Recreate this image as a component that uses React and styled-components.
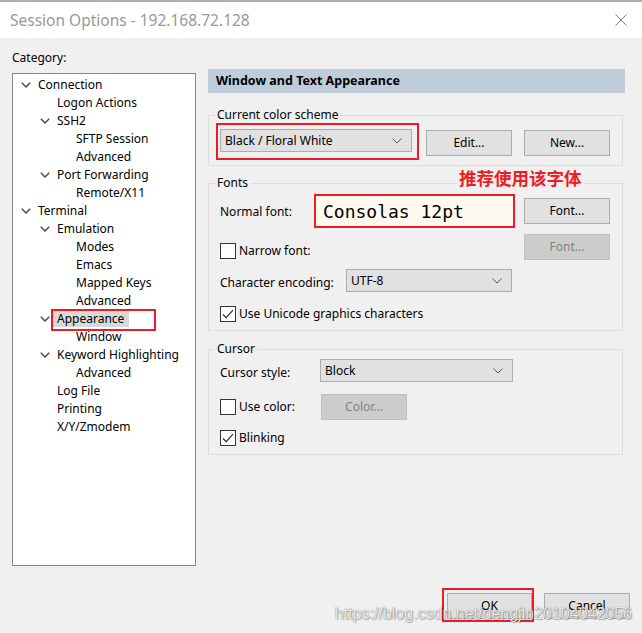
import React from "react";
import styled, { createGlobalStyle } from "styled-components";

const GlobalStyle = createGlobalStyle`
  html, body {
    margin: 0;
    padding: 0;
    background: #f0f0f0;
  }
  body {
    font-family: "Noto Sans", "Open Sans", sans-serif;
    font-size: 12px;
    color: #000;
  }
`;

const tree = [
  { label: "Connection", level: 0, open: true },
  { label: "Logon Actions", level: 1 },
  { label: "SSH2", level: 1, open: true },
  { label: "SFTP Session", level: 2 },
  { label: "Advanced", level: 2 },
  { label: "Port Forwarding", level: 1, open: true },
  { label: "Remote/X11", level: 2 },
  { label: "Terminal", level: 0, open: true },
  { label: "Emulation", level: 1, open: true },
  { label: "Modes", level: 2 },
  { label: "Emacs", level: 2 },
  { label: "Mapped Keys", level: 2 },
  { label: "Advanced", level: 2 },
  { label: "Appearance", level: 1, open: true, selected: true },
  { label: "Window", level: 2 },
  { label: "Keyword Highlighting", level: 1, open: true },
  { label: "Advanced", level: 2 },
  { label: "Log File", level: 1 },
  { label: "Printing", level: 1 },
  { label: "X/Y/Zmodem", level: 1 },
];

function Chevron() {
  return (
    <svg width="10" height="6" viewBox="0 0 10 6">
      <path d="M0.8 0.8 L5 5 L9.2 0.8" fill="none" stroke="#444" strokeWidth="1.4" />
    </svg>
  );
}

function ComboArrow() {
  return (
    <svg width="10" height="6" viewBox="0 0 10 6">
      <path d="M0.5 0.5 L5 5 L9.5 0.5" fill="none" stroke="#555" strokeWidth="1" />
    </svg>
  );
}

function Check({ checked, children }) {
  return (
    <CheckLabel>
      <CheckBox>
        {checked && (
          <svg width="14" height="14" viewBox="0 0 14 14">
            <path d="M2 7.5 L5.2 10.6 L12 3.2" fill="none" stroke="#222" strokeWidth="1.1" />
          </svg>
        )}
      </CheckBox>
      {children}
    </CheckLabel>
  );
}

function Combo({ value, width }) {
  return (
    <ComboBox $w={width}>
      <span>{value}</span>
      <ComboArrow />
    </ComboBox>
  );
}

export default function App() {
  return (
    <>
      <GlobalStyle />
      <Window>
        <TitleBar>
          <Title>Session Options - 192.168.72.128</Title>
          <svg width="12" height="12" viewBox="0 0 12 12">
            <path d="M0.5 0.5 L11.5 11.5 M11.5 0.5 L0.5 11.5" stroke="#777" strokeWidth="1" />
          </svg>
        </TitleBar>

        <Body>
          <Main>
            <LeftColumn>
              <CategoryLabel>Category:</CategoryLabel>
              <TreeBox>
                {tree.map((item, i) => (
                  <TreeRow key={i} $level={item.level}>
                    <ChevronSlot>{item.open && <Chevron />}</ChevronSlot>
                    {item.selected ? (
                      <Marked $t={2} $r={27} $b={4} $l={6}>
                        <Selected>{item.label}</Selected>
                      </Marked>
                    ) : (
                      item.label
                    )}
                  </TreeRow>
                ))}
              </TreeBox>
            </LeftColumn>

            <RightColumn>
              <PanelHeader>Window and Text Appearance</PanelHeader>

              <Group $mt={14} $pt={6} $pb={9}>
                <Legend>Current color scheme</Legend>
                <Row $align="flex-start">
                  <Marked $t={6} $r={7} $b={8} $l={4}>
                    <Combo value="Black / Floral White" width={192} />
                  </Marked>
                  <Button $ml={14} $mt={1}>Edit...</Button>
                  <Button $ml={12} $mt={1}>New...</Button>
                </Row>
              </Group>

              <Group $mt={9} $pt={3} $pb={8}>
                <Legend>Fonts</Legend>
                <Note>推荐使用该字体</Note>
                <Row $h={34}>
                  <FieldLabel $w={94}>Normal font:</FieldLabel>
                  <FontPreview>Consolas 12pt</FontPreview>
                  <Button $ml="auto">Font...</Button>
                </Row>
                <Row $mt={6} $h={25} $align="flex-start">
                  <CheckCell $mt={9}>
                    <Check>Narrow font:</Check>
                  </CheckCell>
                  <Button $ml="auto" disabled>Font...</Button>
                </Row>
                <Row $mt={10} $h={23}>
                  <FieldLabel $w={126} $dy={2}>Character encoding:</FieldLabel>
                  <Combo value="UTF-8" width={166} />
                </Row>
                <Row $mt={14} $h={16}>
                  <Check checked>Use Unicode graphics characters</Check>
                </Row>
              </Group>

              <Group $mt={10} $pt={2} $pb={8}>
                <Legend>Cursor</Legend>
                <Row $h={23}>
                  <FieldLabel $w={100} $dy={2}>Cursor style:</FieldLabel>
                  <Combo value="Block" width={193} />
                </Row>
                <Row $mt={12} $h={25}>
                  <CheckCell $w={101}>
                    <Check>Use color:</Check>
                  </CheckCell>
                  <Button disabled>Color...</Button>
                </Row>
                <Row $mt={11} $h={16}>
                  <Check checked>Blinking</Check>
                </Row>
              </Group>
            </RightColumn>
          </Main>

          <Footer>
            <Marked $t={5} $r={2} $b={3} $l={5}>
              <Button $w={85}>OK</Button>
            </Marked>
            <Button>Cancel</Button>
          </Footer>
        </Body>

        <Watermark>https://blog.csdn.net/dengjin20104042056</Watermark>
      </Window>
    </>
  );
}

const Window = styled.div`
  position: relative;
  height: 633px;
  overflow: hidden;
  display: flex;
  flex-direction: column;
  background: #f0f0f0;
  border-top: 2px solid #b5aea6;
  box-sizing: border-box;
`;

const TitleBar = styled.div`
  height: 36px;
  flex: none;
  background: #fff;
  display: flex;
  align-items: center;
  justify-content: space-between;
  padding: 0 15px 0 10px;
`;

const Title = styled.div`
  font-size: 15.5px;
  color: #999;
  line-height: 20px;
`;

const Body = styled.div`
  padding: 12px 12px 0 12px;
  display: flex;
  flex-direction: column;
`;

const Main = styled.div`
  display: flex;
  gap: 12px;
`;

const LeftColumn = styled.div`
  width: 184px;
  display: flex;
  flex-direction: column;
`;

const CategoryLabel = styled.div`
  line-height: 16px;
  height: 16px;
`;

const TreeBox = styled.div`
  margin-top: 7px;
  height: 493px;
  box-sizing: border-box;
  background: #fff;
  border: 1px solid #828790;
  padding-top: 2px;
`;

const TreeRow = styled.div`
  height: 18px;
  line-height: 18px;
  display: flex;
  align-items: center;
  white-space: nowrap;
  padding-left: ${(p) => 8 + p.$level * 19}px;
`;

const ChevronSlot = styled.span`
  width: 17px;
  flex: none;
  display: flex;
  align-items: center;
`;

const Selected = styled.span`
  display: inline-block;
  background: #d9d9d9;
  line-height: 16px;
  padding: 0 5px 0 4px;
  margin-left: -4px;
`;

const Marked = styled.span`
  position: relative;
  display: inline-flex;

  &::after {
    content: "";
    position: absolute;
    top: -${(p) => p.$t}px;
    right: -${(p) => p.$r}px;
    bottom: -${(p) => p.$b}px;
    left: -${(p) => p.$l}px;
    border: 2px solid #ec1c24;
    pointer-events: none;
  }
`;

const RightColumn = styled.div`
  width: 417px;
  margin-top: 19px;
  display: flex;
  flex-direction: column;
`;

const PanelHeader = styled.div`
  height: 24px;
  line-height: 24px;
  background: #bfcddb;
  padding-left: 8px;
  font-weight: 700;
  font-size: 12.5px;
`;

const Group = styled.fieldset`
  position: relative;
  width: 415px;
  box-sizing: border-box;
  margin: ${(p) => p.$mt}px 0 0 0;
  padding: ${(p) => p.$pt}px 12px ${(p) => p.$pb}px 11px;
  border: 1px solid #dcdcdc;
  min-width: 0;
`;

const Legend = styled.legend`
  padding: 0 2px;
  margin-left: -5px;
  line-height: 16px;
`;

const Note = styled.div`
  position: absolute;
  top: -24px;
  left: 248px;
  padding: 0 2px;
  background: #f0f0f0;
  color: #ee1c25;
  font-family: "Noto Sans CJK SC", sans-serif;
  font-weight: 700;
  font-size: 17.5px;
  line-height: 22px;
`;

const Row = styled.div`
  display: flex;
  align-items: ${(p) => p.$align || "center"};
  margin-top: ${(p) => p.$mt || 0}px;
  height: ${(p) => (p.$h ? `${p.$h}px` : "auto")};
`;

const FieldLabel = styled.div`
  width: ${(p) => p.$w}px;
  flex: none;
  position: relative;
  top: ${(p) => p.$dy || 0}px;
`;

const CheckCell = styled.div`
  width: ${(p) => (p.$w ? `${p.$w}px` : "auto")};
  flex: none;
  margin-top: ${(p) => p.$mt || 0}px;
`;

const CheckLabel = styled.label`
  display: flex;
  align-items: center;
  gap: 3px;
  white-space: nowrap;
  line-height: 16px;
`;

const CheckBox = styled.span`
  width: 16px;
  height: 16px;
  box-sizing: border-box;
  border: 1px solid #333;
  background: #fff;
  display: flex;
  align-items: center;
  justify-content: center;
`;

const ComboBox = styled.div`
  width: ${(p) => p.$w}px;
  height: 23px;
  box-sizing: border-box;
  background: #e1e1e1;
  border: 1px solid #adadad;
  display: flex;
  align-items: center;
  justify-content: space-between;
  padding: 0 9px 0 4px;
  line-height: 16px;
`;

const Button = styled.button`
  width: ${(p) => p.$w || 86}px;
  height: 26px;
  margin-left: ${(p) => (p.$ml === "auto" ? "auto" : `${p.$ml || 0}px`)};
  margin-top: ${(p) => p.$mt || 0}px;
  box-sizing: border-box;
  font-family: inherit;
  font-size: 12px;
  color: #000;
  background: #e1e1e1;
  border: 1px solid #adadad;
  padding: 0;
  line-height: 16px;

  &:disabled {
    background: #cccccc;
    border-color: #bfbfbf;
    color: #838383;
  }
`;

const FontPreview = styled.div`
  width: 201px;
  height: 34px;
  box-sizing: border-box;
  border: 2px solid #ec1c24;
  background: #fffaf0;
  padding-left: 7px;
  display: flex;
  align-items: center;
  font-family: "DejaVu Sans Mono", "Liberation Mono", monospace;
  font-size: 18px;
`;

const Footer = styled.div`
  margin-top: 27px;
  display: flex;
  justify-content: flex-end;
  gap: 12px;
`;

const Watermark = styled.div`
  position: absolute;
  right: 10px;
  top: 602px;
  font-family: "Liberation Sans", Arial, sans-serif;
  font-size: 16px;
  line-height: 20px;
  color: rgba(255, 255, 255, 0.85);
  text-shadow: 0 0 1px rgba(0, 0, 0, 0.55), 1px 1px 1px rgba(0, 0, 0, 0.25);
  pointer-events: none;
`;
